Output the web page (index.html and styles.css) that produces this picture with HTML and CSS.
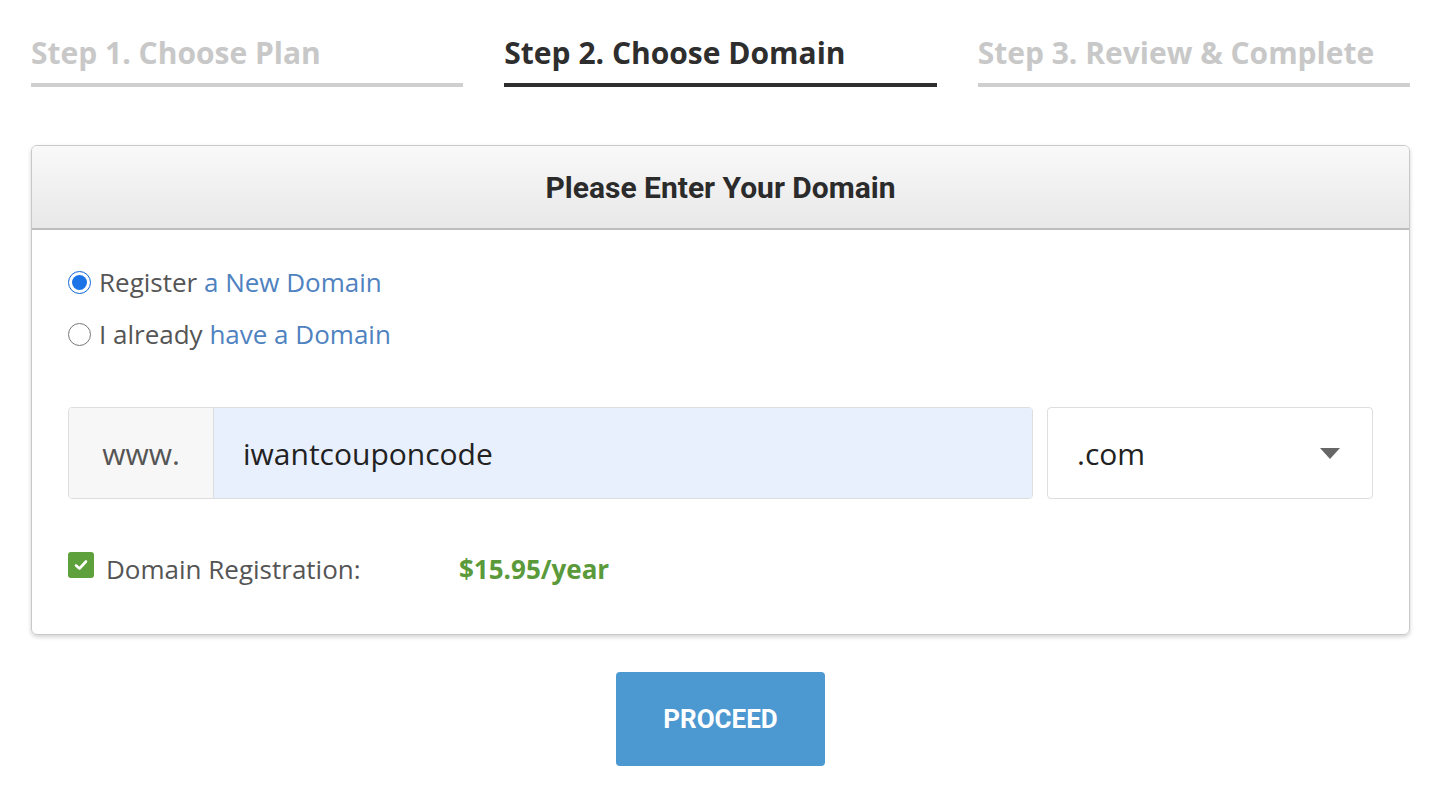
FILE: index.html
```html
<!DOCTYPE html>
<html>
<head>
<meta charset="utf-8">
<link rel="stylesheet" href="styles.css">
</head>
<body>
<div class="page">
  <div class="steps">
    <div class="step">Step 1. Choose Plan</div>
    <div class="step active">Step 2. Choose Domain</div>
    <div class="step">Step 3. Review &amp; Complete</div>
  </div>

  <div class="card">
    <div class="card-head">Please Enter Your Domain</div>
    <div class="card-body">
      <label class="radio-row"><span class="radio checked"></span><span>Register <span class="link">a New Domain</span></span></label>
      <label class="radio-row"><span class="radio"></span><span>I already <span class="link">have a Domain</span></span></label>

      <div class="domain-row">
        <div class="input-group">
          <div class="addon">www.</div>
          <div class="field">iwantcouponcode</div>
        </div>
        <div class="select">
          <span>.com</span>
          <svg class="caret" width="20" height="11" viewBox="0 0 20 11"><path d="M0 0 H20 L10 11 Z" fill="#666"/></svg>
        </div>
      </div>

      <div class="reg-row">
        <span class="check"><svg width="14" height="12" viewBox="0 0 14 12"><path d="M2 6.5 L5.5 9.5 L12 2.5" stroke="#fff" stroke-width="2.6" fill="none" stroke-linecap="round" stroke-linejoin="round"/></svg></span>
        <span class="reg-label">Domain Registration:</span>
        <span class="price">$15.95/year</span>
      </div>
    </div>
  </div>

  <div class="actions">
    <button class="proceed">PROCEED</button>
  </div>
</div>
</body>
</html>
```

FILE: styles.css
```css
html, body {
  margin: 0;
  padding: 0;
  background: #fff;
}
.page {
  width: 1379px;
  margin-left: 31px;
  font-family: "Open Sans", "Liberation Sans", sans-serif;
}
.steps {
  display: flex;
  gap: 41px;
  padding-top: 33px;
}
.step {
  flex: 1;
  font-size: 30px;
  font-weight: 700;
  color: #c8c8c8;
  line-height: 40px;
  padding-bottom: 10px;
  border-bottom: 4px solid #cfcfcf;
}
.step.active {
  color: #2e2e2e;
  border-bottom-color: #2e2e2e;
}
.card {
  margin-top: 58px;
  border: 1px solid #c9c9c9;
  border-radius: 6px;
  box-shadow: 0 2px 4px rgba(0,0,0,0.18);
  overflow: hidden;
}
.card-head {
  height: 82px;
  display: flex;
  align-items: center;
  justify-content: center;
  font-family: Roboto, "Liberation Sans", sans-serif;
  font-weight: 700;
  font-size: 30px;
  color: #2b2b2b;
  background: linear-gradient(#f9f9f9, #e8e8e8);
  border-bottom: 2px solid #bdbdbd;
}
.card-body {
  padding: 34px 36px 47px 36px;
}
.radio-row {
  display: flex;
  align-items: center;
  gap: 8px;
  font-size: 26px;
  color: #555;
  height: 36px;
  margin-bottom: 16px;
}
.radio {
  width: 23px;
  height: 23px;
  border-radius: 50%;
  border: 1px solid #777;
  box-sizing: border-box;
  background: #fff;
  position: relative;
}
.radio.checked {
  border: 1px solid #0a66d8;
  background: #fff;
}
.radio.checked::after {
  content: "";
  position: absolute;
  left: 3px; top: 3px;
  width: 15px; height: 15px;
  border-radius: 50%;
  background: #1a74e8;
}
.link {
  color: #4f82c0;
}
.domain-row {
  display: flex;
  gap: 14px;
  margin-top: 55px;
}
.input-group {
  display: flex;
  width: 965px;
  height: 92px;
  border: 1px solid #dedede;
  border-radius: 4px;
  box-sizing: border-box;
  overflow: hidden;
}
.addon {
  width: 144px;
  background: #f7f7f7;
  border-right: 1px solid #dedede;
  display: flex;
  align-items: center;
  justify-content: center;
  font-size: 30px;
  color: #555;
}
.field {
  flex: 1;
  background: #e8f0fe;
  display: flex;
  align-items: center;
  padding-left: 29px;
  font-size: 30px;
  color: #222;
}
.select {
  width: 326px;
  height: 92px;
  box-sizing: border-box;
  border: 1px solid #dedede;
  border-radius: 4px;
  display: flex;
  align-items: center;
  justify-content: space-between;
  padding: 0 32px 0 29px;
  font-size: 30px;
  color: #222;
}
.reg-row {
  display: flex;
  align-items: center;
  margin-top: 52px;
  font-size: 26px;
  color: #555;
}
.check {
  width: 26px;
  height: 26px;
  border-radius: 3px;
  background: #5ea13c;
  display: flex;
  align-items: center;
  justify-content: center;
  margin-top: -9px;
}
.reg-label {
  margin-left: 12px;
  width: 353px;
}
.price {
  color: #5a9a3a;
  font-weight: 700;
}
.actions {
  display: flex;
  justify-content: center;
  margin-top: 37px;
}
.proceed {
  width: 209px;
  height: 94px;
  background: #4c98d1;
  border: none;
  border-radius: 4px;
  color: #fff;
  font-family: Roboto, "Liberation Sans", sans-serif;
  font-weight: 700;
  font-size: 26px;
}
```
